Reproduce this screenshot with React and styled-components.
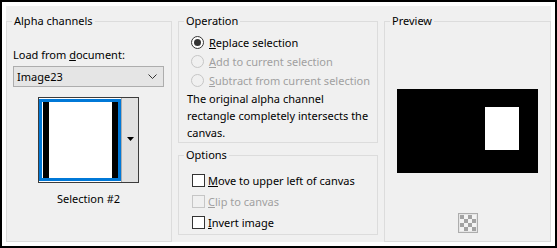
import React from "react";
import styled, { createGlobalStyle } from "styled-components";

const GlobalStyle = createGlobalStyle`
  html, body {
    margin: 0;
    padding: 0;
    background: #fff;
  }
  body {
    font-family: "Noto Sans", "Open Sans", sans-serif;
    font-size: 11px;
    color: #000;
  }
`;

const Frame = styled.div`
  width: 557px;
  height: 248px;
  box-sizing: border-box;
  border: 2px solid #000;
  background: #fff;
  padding: 4px;
`;

const Dialog = styled.div`
  height: 100%;
  box-sizing: border-box;
  background: #f0f0f0;
  padding-top: 7px;
  display: grid;
  grid-template-columns: 166px 200px 167px;
  column-gap: 6px;
`;

const Column = styled.div`
  display: flex;
  flex-direction: column;
  gap: 4px;
`;

const Group = styled.fieldset`
  margin: 0;
  padding: 0;
  min-width: 0;
  box-sizing: border-box;
  border: 1px solid #dcdcdc;
  height: ${({ $h }) => ($h ? `${$h}px` : "auto")};
  flex: ${({ $h }) => ($h ? "none" : "1")};
  display: flex;
  flex-direction: column;
`;

const Legend = styled.legend`
  margin-left: 5px;
  padding: 0 2px;
  line-height: 16px;
  font-size: 11px;
  color: #000;
`;

const AlphaBody = styled.div`
  display: flex;
  flex-direction: column;
  padding: 18px 7px 0 6px;
`;

const Label = styled.div`
  line-height: 16px;
  white-space: nowrap;
`;

const Select = styled.div`
  margin-top: 3px;
  height: 21px;
  box-sizing: border-box;
  border: 1px solid #adadad;
  background: #e5e5e5;
  display: flex;
  align-items: center;
  justify-content: space-between;
  padding: 0 6px 0 3px;
  line-height: 16px;
`;

const ThumbPicker = styled.div`
  margin-top: 10px;
  align-self: center;
  display: flex;
  width: 101px;
  height: 86px;
  box-sizing: border-box;
  border: 1px solid #3c3c3c;
  background: #fff;
`;

const ThumbCell = styled.div`
  padding: 1px 0;
  width: 82px;
`;

const Thumb = styled.div`
  height: 100%;
  box-sizing: border-box;
  border: 3px solid #0078d7;
  display: flex;
`;

const Bar = styled.div`
  width: 6px;
  background: #000;
  margin-left: ${({ $left }) => ($left ? "1px" : "0")};
`;

const Fill = styled.div`
  flex: 1;
  background: #fff;
`;

const DropButton = styled.div`
  flex: 1;
  border-left: 1px solid #adadad;
  background: #e1e1e1;
  display: flex;
  align-items: center;
  justify-content: center;
  padding-bottom: 2px;
`;

const Caption = styled.div`
  margin-top: 8px;
  line-height: 16px;
  text-align: center;
`;

const OpBody = styled.div`
  display: flex;
  flex-direction: column;
  padding-top: 4px;
`;

const OptionRow = styled.label`
  display: flex;
  align-items: center;
  height: ${({ $h }) => $h}px;
  padding-left: ${({ $pl }) => $pl}px;
  gap: ${({ $gap }) => $gap}px;
  white-space: nowrap;
  color: ${({ $disabled }) => ($disabled ? "#a0a0a0" : "#000")};
`;

const Radio = styled.span`
  width: 13px;
  height: 13px;
  box-sizing: border-box;
  border-radius: 50%;
  border: 1px solid ${({ $disabled }) => ($disabled ? "#c6c6c6" : "#333")};
  background: ${({ $disabled }) => ($disabled ? "#f0f0f0" : "#fff")};
  display: flex;
  align-items: center;
  justify-content: center;
  flex: none;

  &::after {
    content: "";
    width: 7px;
    height: 7px;
    border-radius: 50%;
    background: #333;
    display: ${({ $checked }) => ($checked ? "block" : "none")};
  }
`;

const Check = styled.span`
  width: 13px;
  height: 13px;
  box-sizing: border-box;
  border: 1px solid ${({ $disabled }) => ($disabled ? "#c6c6c6" : "#333")};
  background: ${({ $disabled }) => ($disabled ? "#f0f0f0" : "#fff")};
  flex: none;
`;

const Note = styled.div`
  padding-left: 8px;
  line-height: 17px;
  white-space: nowrap;
`;

const OptBody = styled.div`
  display: flex;
  flex-direction: column;
  padding-top: 7px;
`;

const PreviewBody = styled.div`
  display: flex;
  flex-direction: column;
  align-items: center;
`;

const PreviewImage = styled.svg`
  display: block;
  margin-top: 60px;
`;

const Transparency = styled.svg`
  display: block;
  margin-top: 40px;
`;

const Chevron = () => (
  <svg width="9" height="5" viewBox="0 0 9 5">
    <polyline points="0.5,0.5 4.5,4.5 8.5,0.5" fill="none" stroke="#333" strokeWidth="1" />
  </svg>
);

const Caret = () => (
  <svg width="7" height="4" viewBox="0 0 7 4">
    <polygon points="0,0 7,0 3.5,4" fill="#000" />
  </svg>
);

const App = () => {
  const checker = [];
  for (let r = 0; r < 4; r++) {
    for (let c = 0; c < 4; c++) {
      if ((r + c) % 2 === 0) {
        checker.push(<rect key={`${r}-${c}`} x={2 + c * 4} y={2 + r * 4} width="4" height="4" fill="#a3a3a3" />);
      }
    }
  }

  return (
    <Frame>
      <GlobalStyle />
      <Dialog>
        <Group>
          <Legend>Alpha channels</Legend>
          <AlphaBody>
            <Label>
              Load from <u>d</u>ocument:
            </Label>
            <Select>
              <span>Image23</span>
              <Chevron />
            </Select>
            <ThumbPicker>
              <ThumbCell>
                <Thumb>
                  <Bar $left />
                  <Fill />
                  <Bar />
                </Thumb>
              </ThumbCell>
              <DropButton>
                <Caret />
              </DropButton>
            </ThumbPicker>
            <Caption>Selection #2</Caption>
          </AlphaBody>
        </Group>

        <Column>
          <Group $h={130}>
            <Legend>Operation</Legend>
            <OpBody>
              <OptionRow $h={19} $pl={12} $gap={5}>
                <Radio $checked />
                <span>
                  <u>R</u>eplace selection
                </span>
              </OptionRow>
              <OptionRow $h={19} $pl={12} $gap={5} $disabled>
                <Radio $disabled />
                <span>
                  <u>A</u>dd to current selection
                </span>
              </OptionRow>
              <OptionRow $h={19} $pl={12} $gap={5} $disabled>
                <Radio $disabled />
                <span>
                  <u>S</u>ubtract from current selection
                </span>
              </OptionRow>
              <Note>
                The original alpha channel
                <br />
                rectangle completely intersects the
                <br />
                canvas.
              </Note>
            </OpBody>
          </Group>
          <Group $h={88}>
            <Legend>Options</Legend>
            <OptBody>
              <OptionRow $h={21} $pl={13} $gap={3}>
                <Check />
                <span>
                  <u>M</u>ove to upper left of canvas
                </span>
              </OptionRow>
              <OptionRow $h={21} $pl={13} $gap={3} $disabled>
                <Check $disabled />
                <span>
                  <u>C</u>lip to canvas
                </span>
              </OptionRow>
              <OptionRow $h={21} $pl={13} $gap={3}>
                <Check />
                <span>
                  <u>I</u>nvert image
                </span>
              </OptionRow>
            </OptBody>
          </Group>
        </Column>

        <Group>
          <Legend>Preview</Legend>
          <PreviewBody>
            <PreviewImage width="141" height="84" viewBox="0 0 141 84">
              <rect width="141" height="84" fill="#000" />
              <rect x="88" y="18" width="34" height="43" fill="#fff" />
            </PreviewImage>
            <Transparency width="20" height="20" viewBox="0 0 20 20">
              <rect x="0.5" y="0.5" width="19" height="19" fill="#e6e6e6" stroke="#adadad" />
              <rect x="2" y="2" width="16" height="16" fill="#f4f4f4" />
              {checker}
            </Transparency>
          </PreviewBody>
        </Group>
      </Dialog>
    </Frame>
  );
};

export default App;
